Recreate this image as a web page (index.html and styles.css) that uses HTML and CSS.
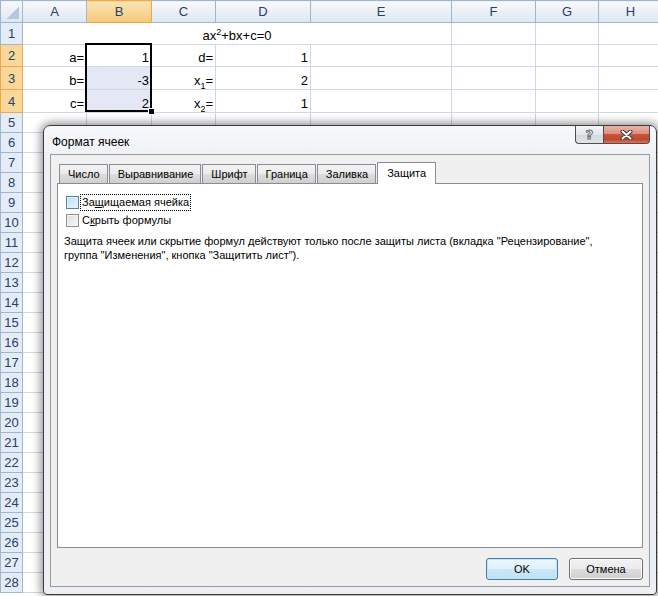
FILE: index.html
```html
<!DOCTYPE html>
<html lang="ru">
<head>
    <meta charset="UTF-8">
    <title>Формат ячеек</title>
    <link rel="stylesheet" href="styles.css">
</head>
<body>

    <div class="sheet">
        <table class="grid" id="grid">
            <colgroup>
                <col class="col-head">
                <col class="col-a">
                <col class="col-b">
                <col class="col-c">
                <col class="col-d">
                <col class="col-e">
                <col class="col-f">
                <col class="col-g">
                <col class="col-h">
            </colgroup>
            <thead>
                <tr class="head-row">
                    <th class="corner"></th>
                    <th>A</th>
                    <th class="active">B</th>
                    <th>C</th>
                    <th>D</th>
                    <th>E</th>
                    <th>F</th>
                    <th>G</th>
                    <th>H</th>
                </tr>
            </thead>
            <tbody>
                <tr class="row-1">
                    <th>1</th>
                    <td colspan="5" class="formula">ax<sup>2</sup>+bx+c=0</td>
                    <td></td>
                    <td></td>
                    <td></td>
                </tr>
                <tr class="row-2">
                    <th class="active">2</th>
                    <td>a=</td>
                    <td>1</td>
                    <td>d=</td>
                    <td>1</td>
                    <td></td>
                    <td></td>
                    <td></td>
                    <td></td>
                </tr>
                <tr class="row-3">
                    <th class="active">3</th>
                    <td>b=</td>
                    <td class="picked">-3</td>
                    <td>x<sub>1</sub>=</td>
                    <td>2</td>
                    <td></td>
                    <td></td>
                    <td></td>
                    <td></td>
                </tr>
                <tr class="row-4">
                    <th class="active">4</th>
                    <td>c=</td>
                    <td class="picked">2</td>
                    <td>x<sub>2</sub>=</td>
                    <td>1</td>
                    <td></td>
                    <td></td>
                    <td></td>
                    <td></td>
                </tr>
            </tbody>
        </table>

        <!-- рамка выделения B2:B4 -->
        <div class="selection"><span class="fill-handle"></span></div>
    </div>

    <div class="dialog">
        <div class="titlebar">
            <span class="title">Формат ячеек</span>
            <div class="caption-buttons">
                <button class="cap help">?</button>
                <button class="cap close">
                    <svg width="13" height="10" viewBox="0 0 13 10">
                        <path d="M2.5 1.5 L10.5 8.5 M10.5 1.5 L2.5 8.5" stroke="#3a3a3a" stroke-width="4" stroke-linecap="round"/>
                        <path d="M2.5 1.5 L10.5 8.5 M10.5 1.5 L2.5 8.5" stroke="#ffffff" stroke-width="2" stroke-linecap="round"/>
                    </svg>
                </button>
            </div>
        </div>

        <div class="client">
            <ul class="tabs">
                <li>Число</li>
                <li>Выравнивание</li>
                <li>Шрифт</li>
                <li>Граница</li>
                <li>Заливка</li>
                <li class="active">Защита</li>
            </ul>

            <div class="tab-page">
                <label class="check">
                    <span class="box hot"></span>
                    <span class="caption focused">За<u>щ</u>ищаемая ячейка</span>
                </label>
                <label class="check">
                    <span class="box"></span>
                    <span class="caption">С<u>к</u>рыть формулы</span>
                </label>
                <p class="note">Защита ячеек или скрытие формул действуют только после защиты листа (вкладка "Рецензирование",<br>группа "Изменения", кнопка "Защитить лист").</p>
            </div>

            <div class="actions">
                <button class="btn ok">OK</button>
                <button class="btn cancel">Отмена</button>
            </div>
        </div>
    </div>

    <script>
        // пустые строки 5-28
        const tbody = document.querySelector('#grid tbody');
        for (let r = 5; r <= 28; r++) {
            tbody.insertAdjacentHTML('beforeend',
                `<tr><th>${r}</th>${'<td></td>'.repeat(8)}</tr>`);
        }
    </script>

</body>
</html>
```

FILE: styles.css
```css
body {
    margin: 0;
    overflow: hidden;
    background-color: #fff;
    font-family: 'Liberation Sans', Arial, sans-serif;
}

/* ---- лист ---- */

.sheet {
    position: relative;
    width: 662px;
}

.grid {
    width: 662px;
    table-layout: fixed;
    border-collapse: collapse;
    font-size: 13px;
    color: #000;
}

.col-head { width: 22px; }
.col-a { width: 64px; }
.col-b { width: 65px; }
.col-c { width: 64px; }
.col-d { width: 95px; }
.col-e { width: 141px; }
.col-f { width: 84px; }
.col-g { width: 63px; }
.col-h { width: 64px; }

.grid tr {
    height: 20px;
}

.grid .head-row { height: 22px; }
.grid .row-1 { height: 22px; }
.grid .row-2 { height: 22px; }
.grid .row-3 { height: 23px; }
.grid .row-4 { height: 23px; }

.grid td {
    border: 1px solid #d0d7e5;
    padding: 0 2px 0 0;
    text-align: right;
    white-space: nowrap;
    overflow: hidden;
    vertical-align: bottom;
    line-height: 17px;
}

.grid td.picked {
    background-color: #e4e8f4;
}

.grid td.formula {
    text-align: center;
    padding: 0;
}

.grid sup, .grid sub {
    font-size: 9px;
    line-height: 0;
}

.grid th {
    border: 1px solid #9eb6ce;
    padding: 0;
    font-weight: normal;
    font-size: 13px;
    color: #27416b;
    background-color: #e4ecf7;
    text-align: center;
}

.grid thead th {
    background: linear-gradient(#f7f9fc, #dde6f1);
}

.grid thead th.corner {
    background:
        linear-gradient(135deg, transparent 50%, #b7c7dc 50%) right 3px bottom 3px / 13px 13px no-repeat,
        linear-gradient(#f7f9fc, #dde6f1);
}

.grid thead th.active {
    background: linear-gradient(#fae3b5, #f6c97a);
    border-color: #f2a64e;
}

.grid tbody th.active {
    background-color: #f9d89a;
    border-color: #f2a64e;
}

.selection {
    position: absolute;
    left: 85px;
    top: 43px;
    width: 67px;
    height: 69px;
    box-sizing: border-box;
    border: 2px solid #000;
}

.fill-handle {
    position: absolute;
    right: -4px;
    bottom: -4px;
    width: 5px;
    height: 5px;
    background-color: #000;
    border: 1px solid #fff;
    border-width: 1px 0 0 1px;
}

/* ---- окно диалога ---- */

.dialog {
    position: absolute;
    left: 43px;
    top: 125px;
    width: 614px;
    height: 470px;
    box-sizing: border-box;
    display: flex;
    flex-direction: column;
    padding: 0 6px 7px;
    border: 1px solid #3a3a3a;
    border-radius: 7px 7px 4px 4px;
    background: linear-gradient(rgba(246, 248, 251, 0.93), rgba(236, 239, 243, 0.97) 40px);
    box-shadow: 0 0 10px 2px rgba(0, 0, 0, 0.45);
    font-size: 11px;
    color: #000;
}

.titlebar {
    height: 28px;
    display: flex;
    align-items: center;
    padding-left: 2px;
}

.title {
    padding-top: 3px;
    font-size: 12px;
}

.caption-buttons {
    position: absolute;
    top: 0;
    right: 6px;
    display: flex;
}

.cap {
    height: 18px;
    margin: 0;
    padding: 0;
    border: 1px solid #4e4e4e;
    border-top: none;
    display: flex;
    align-items: center;
    justify-content: center;
}

.cap.help {
    width: 28px;
    border-right: none;
    border-radius: 0 0 0 4px;
    background: linear-gradient(#f4f6f8, #e3e6ea 50%, #d4d8de 51%, #dfe3e8);
    font-family: 'DejaVu Sans', sans-serif;
    font-size: 13px;
    font-weight: bold;
    color: #fff;
    -webkit-text-stroke: 1px #6b6b6b;
}

.cap.close {
    width: 47px;
    border-radius: 0 0 4px 0;
    background: linear-gradient(#eab2a6, #de8e80 45%, #c9533f 50%, #c24731 80%, #d6785c);
}

.client {
    flex: 1;
    display: flex;
    flex-direction: column;
    padding: 7px 6px 0;
    border: 1px solid #9a9a9a;
    background-color: #f0f0f0;
}

.tabs {
    list-style: none;
    margin: 0 0 0 2px;
    padding: 0;
    height: 21px;
    display: flex;
    align-items: flex-end;
    position: relative;
    z-index: 1;
}

.tabs li {
    height: 19px;
    box-sizing: border-box;
    margin-right: 1px;
    padding: 0 7px 0 8px;
    line-height: 18px;
    border: 1px solid #898c95;
    border-bottom: none;
    background: linear-gradient(#f3f3f3, #ebebeb 50%, #dddddd 51%, #cfcfcf);
}

.tabs li.active {
    height: 22px;
    margin-bottom: -1px;
    padding: 0 9px;
    line-height: 20px;
    background: #fff;
}

.tab-page {
    height: 365px;
    box-sizing: border-box;
    padding: 9px 8px;
    border: 1px solid #898c95;
    background-color: #fff;
}

.check {
    display: flex;
    align-items: center;
    height: 18px;
}

.box {
    width: 13px;
    height: 13px;
    box-sizing: border-box;
    margin-right: 2px;
    border: 1px solid #8e8f8f;
    background: linear-gradient(135deg, #dcdcdc, #fbfbfb);
    box-shadow: inset 0 0 0 1px #f4f4f4;
}

.box.hot {
    border-color: #5586a3;
    background: linear-gradient(135deg, #b9dff4, #eaf6fd);
    box-shadow: inset 0 0 0 1px #def0fa;
}

.caption {
    padding: 0 1px;
    line-height: 15px;
}

.caption.focused {
    outline: 1px dotted #000;
}

.note {
    margin: 5px 0 0 -2px;
    line-height: 14px;
}

.actions {
    display: flex;
    justify-content: flex-end;
    gap: 11px;
    margin-top: 10px;
}

.btn {
    height: 22px;
    padding: 0;
    border-radius: 3px;
    font-family: 'Liberation Sans', Arial, sans-serif;
    font-size: 11px;
    color: #000;
}

.btn.ok {
    width: 72px;
    border: 1px solid #3c7fb1;
    background: linear-gradient(#eef7fd, #dff0fa 50%, #cbe7f8 51%, #bfe0f4);
    box-shadow: inset 0 0 0 1px #c4e5f6;
}

.btn.cancel {
    width: 74px;
    border: 1px solid #707070;
    background: linear-gradient(#f2f2f2, #ebebeb 50%, #dddddd 51%, #cfcfcf);
    box-shadow: inset 0 0 0 1px #fcfcfc;
}
```
